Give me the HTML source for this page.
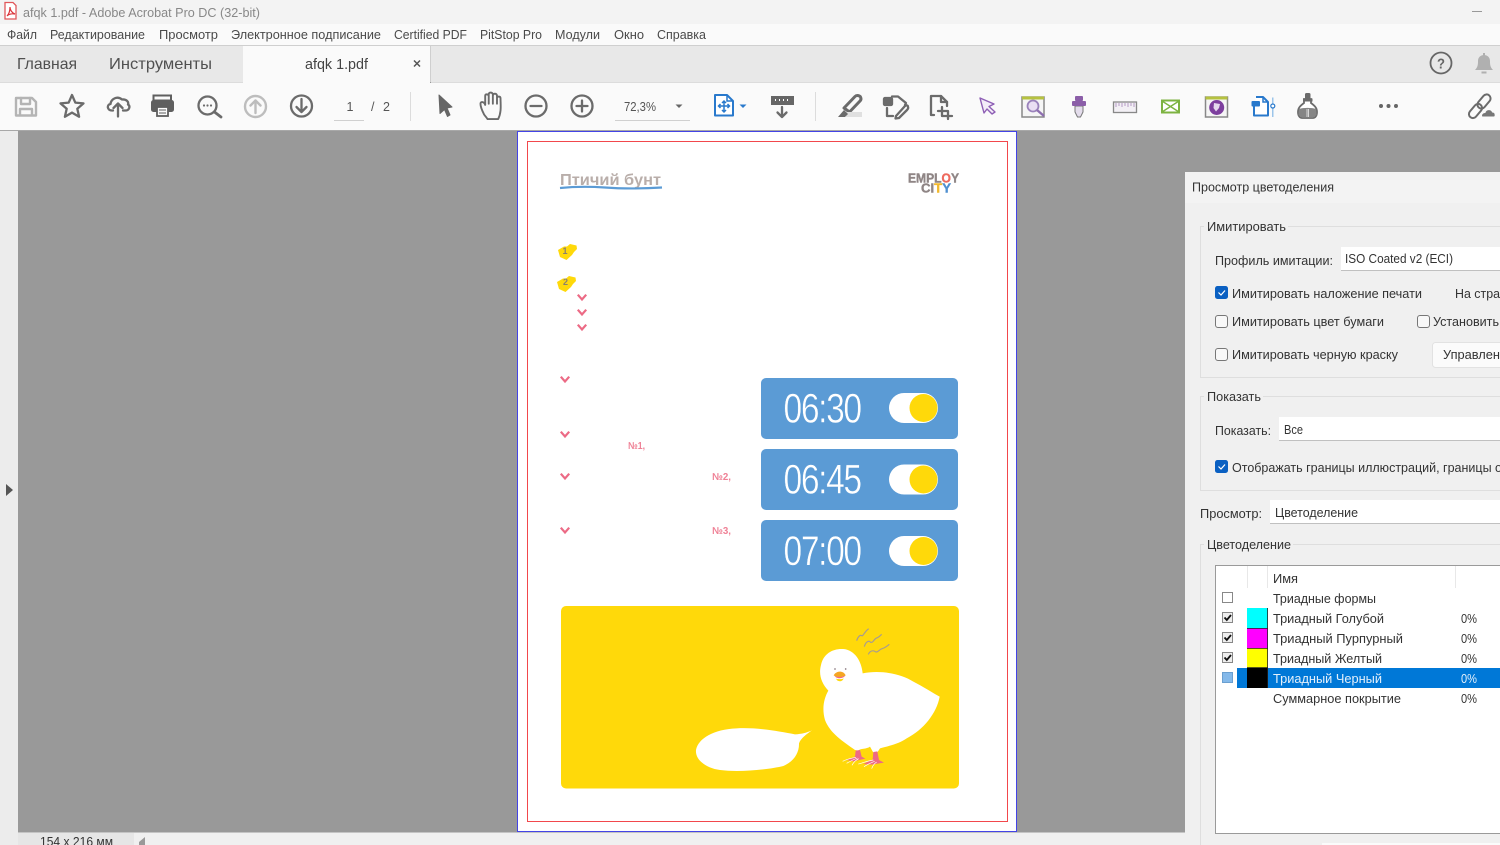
<!DOCTYPE html>
<html lang="ru"><head><meta charset="utf-8"><title>afqk 1.pdf - Adobe Acrobat Pro DC</title>
<style>
html,body{margin:0;padding:0;width:1500px;height:845px;overflow:hidden;background:#999}
svg{display:block}
text{font-family:"Liberation Sans","DejaVu Sans",sans-serif;font-size:13px;fill:#3c3c3c}
.m{fill:#4a4a4a;font-size:12.5px}
.d{fill:#333}
.i{fill:none;stroke:#6b6b6b;stroke-width:2.3;stroke-linecap:round;stroke-linejoin:round}
.l{fill:none;stroke:#b4b4b4;stroke-width:2.4;stroke-linecap:round;stroke-linejoin:round}
.g{fill:none;stroke:#dedede;stroke-width:1}
.v{fill:none;stroke:#ec6a85;stroke-width:2.2;stroke-linecap:butt;stroke-linejoin:miter}
.t{font-size:42px;fill:#fff;stroke:#5b9bd5;stroke-width:.5;letter-spacing:-1.7px}
</style></head><body>
<svg xmlns="http://www.w3.org/2000/svg" width="1500" height="845" viewBox="0 0 1500 845">
<defs>
<path id="chev" class="v" d="M-4.2 -3.300 L0 1.500 L4.200 -3.300"/>
</defs>

<!-- chrome backgrounds -->
<rect width="1500" height="24" fill="#f3f3f3"/>
<rect y="24" width="1500" height="21" fill="#fafafa"/>
<rect y="45" width="1500" height="1" fill="#cfcfcf"/>
<rect y="46" width="1500" height="36" fill="#e8e8e8"/>
<rect x="243" y="46" width="187" height="37" fill="#fafafa"/>
<rect x="430" y="46" width="1" height="36" fill="#cfcfcf"/>
<rect y="82" width="243" height="1" fill="#dcdcdc"/><rect x="431" y="82" width="1069" height="1" fill="#dcdcdc"/>
<rect y="83" width="1500" height="47" fill="#fafafa"/>
<rect y="130" width="1500" height="1" fill="#a8a8a8"/>
<rect y="131" width="18" height="714" fill="#ececec"/>
<rect x="18" y="131" width="1482" height="701" fill="#999"/>
<rect x="18" y="832" width="1482" height="13" fill="#f0f0f0"/>
<rect x="18" y="832" width="116" height="13" fill="#e6e6e6"/>
<rect x="18" y="832" width="1167" height="1" fill="#c4c4c4"/>
<path d="M6 484 L13 490 L6 496Z" fill="#555"/>
<path d="M145 837 L145 845 L139 845 L139 842Z" fill="#999"/>
<text x="40" y="846" textLength="73" lengthAdjust="spacingAndGlyphs" class="d" style="font-size:12.5px">154 x 216 мм</text>

<!-- title bar -->
<path d="M5 2.500 H13 L16 5.500 V19 H5Z" fill="#fff" stroke="#e0575a" stroke-width="1.300"/>
<path d="M7 16 C9 14 10 10 10 7 C10 10 12 13 15 14 C12 13.500 9 14 7 16Z" fill="none" stroke="#d9343a" stroke-width="1.200"/>
<text x="23" y="17" textLength="237" lengthAdjust="spacingAndGlyphs" style="fill:#888;font-size:13px">afqk 1.pdf - Adobe Acrobat Pro DC (32-bit)</text>
<rect x="1472" y="11" width="10" height="1" fill="#999"/>

<!-- menu -->
<text class="m" x="7" y="39" textLength="30" lengthAdjust="spacingAndGlyphs">Файл</text>
<text class="m" x="50" y="39" textLength="95" lengthAdjust="spacingAndGlyphs">Редактирование</text>
<text class="m" x="159" y="39" textLength="59" lengthAdjust="spacingAndGlyphs">Просмотр</text>
<text class="m" x="231" y="39" textLength="150" lengthAdjust="spacingAndGlyphs">Электронное подписание</text>
<text class="m" x="394" y="39" textLength="73" lengthAdjust="spacingAndGlyphs">Certified PDF</text>
<text class="m" x="480" y="39" textLength="62" lengthAdjust="spacingAndGlyphs">PitStop Pro</text>
<text class="m" x="555" y="39" textLength="45" lengthAdjust="spacingAndGlyphs">Модули</text>
<text class="m" x="614" y="39" textLength="30" lengthAdjust="spacingAndGlyphs">Окно</text>
<text class="m" x="657" y="39" textLength="49" lengthAdjust="spacingAndGlyphs">Справка</text>

<!-- tabs -->
<text x="17" y="69" textLength="60" lengthAdjust="spacingAndGlyphs" style="font-size:16px;fill:#505050">Главная</text>
<text x="109" y="69" textLength="103" lengthAdjust="spacingAndGlyphs" style="font-size:16px;fill:#505050">Инструменты</text>
<text x="305" y="69" textLength="63" lengthAdjust="spacingAndGlyphs" style="font-size:15px;fill:#444">afqk 1.pdf</text>
<path d="M414 60.500 L420 66.500 M420 60.500 L414 66.500" stroke="#555" stroke-width="1.500"/>
<circle cx="1441" cy="63" r="10.500" fill="none" stroke="#666" stroke-width="1.800"/>
<text x="1437" y="68.500" textLength="8" lengthAdjust="spacingAndGlyphs" style="font-size:15px;font-weight:bold;fill:#666">?</text>
<path d="M1475 70 C1478 67 1478 64 1478 61 C1478 57 1481 55 1484 55 C1487 55 1490 57 1490 61 C1490 64 1490 67 1493 70Z" fill="#b0b0b0"/><rect x="1483" y="53" width="2" height="3" fill="#b0b0b0"/><rect x="1481.500" y="71.500" width="5" height="2" fill="#b0b0b0"/>

<!-- toolbar icons left -->
<g class="l"><path d="M16 98 H32 L36 102 V115.500 H16Z"/><path d="M21 98 V104 H30 V98"/><path d="M20 115 V109 H32 V115"/></g>
<path class="i" d="M72 95 L75.300 102.600 L83.500 103.400 L77.300 108.800 L79.100 116.800 L72 112.600 L64.900 116.800 L66.700 108.800 L60.500 103.400 L68.700 102.600Z"/>
<path class="i" d="M113 110.500 H112 C107 110.500 106.500 104.500 110.500 104 C111 99 117 95.500 122 99.500 C126.500 99 129 102 128 104.500 C130.500 106 129.500 110.500 125.500 110.500 H123 M118 116.500 V104 M113.500 108 L118 103.500 L122.500 108"/>
<g><path d="M153.500 95.500 H171 V100.500 H153.500Z" fill="none" stroke="#5f5f5f" stroke-width="2"/><rect x="151" y="100" width="23" height="12" rx="2.500" fill="#5f5f5f"/><rect x="157" y="107" width="11" height="9" fill="#fafafa" stroke="#5f5f5f" stroke-width="1.800"/><path d="M159 110 H166 M159 113 H166" stroke="#5f5f5f"/></g>
<g class="i"><circle cx="207.500" cy="105.500" r="9"/><path d="M214.500 112 L221 117" stroke-width="2.800"/></g>
<circle cx="204" cy="105.500" r="1.100" fill="#6b6b6b"/><circle cx="207.500" cy="105.500" r="1.100" fill="#6b6b6b"/><circle cx="211" cy="105.500" r="1.100" fill="#6b6b6b"/>
<g class="l" style="stroke:#bdbdbd"><circle cx="255.500" cy="106.500" r="10.500"/><path d="M255.500 113 V100.500 M250.500 105.500 L255.500 100.500 L260.500 105.500"/></g>
<g class="i"><circle cx="301.500" cy="106" r="10.500"/><path d="M301.500 99 V112 M296.500 107 L301.500 112 L306.500 107"/></g>
<text x="346.500" y="111" style="font-size:12.500px;fill:#555">1</text>
<text x="371" y="111" textLength="19" lengthAdjust="spacing" style="font-size:12.500px;fill:#555">/ 2</text>
<rect x="334" y="120" width="30" height="1" fill="#d0d0d0"/>
<rect x="410" y="92" width="1" height="29" fill="#dcdcdc"/>
<path d="M439 95 L452 107 L447 108 L450 115 L447.500 116.500 L444.500 109.500 L440 113.500Z" fill="#666" stroke="#666" stroke-linejoin="round"/>
<g transform="translate(490.500 105.500) scale(1.180) translate(-488.500 -105.500)"><path class="i" style="stroke-width:1.600" d="M483 113 C481 109 480 106 480 104 C480 102 483 102 484 105 V97.500 C484 95.500 486.500 95.500 487 97.500 V96 C487 94 490 94 490.500 96 V97 C491 95 493.500 95 494 97 V99 C494.500 97.500 497 97.500 497 99.500 C497 105 498 111 495 117 H486 C485 115.500 484 114.500 483 113Z M487 97.500 V104 M490.500 97 V104 M494 99 V104"/></g>
<g class="i"><circle cx="536" cy="106" r="10.500"/><path d="M530.500 106 H541.500"/></g>
<g class="i"><circle cx="582" cy="106" r="10.500"/><path d="M576.500 106 H587.500 M582 100.500 V111.500"/></g>
<text x="624" y="111" textLength="32" lengthAdjust="spacingAndGlyphs" style="font-size:12.500px;fill:#555">72,3%</text>
<path d="M675.500 104.500 H682.500 L679 108Z" fill="#666"/>
<rect x="615" y="120" width="75" height="1" fill="#d0d0d0"/>
<path d="M715 95 H727 L733 101 V115.500 H715Z" fill="#fff" stroke="#2979cc" stroke-width="2" stroke-linejoin="round"/><path d="M727 95 V101 H733" fill="none" stroke="#2979cc" stroke-width="1.500"/>
<path d="M724 101 V112 M718.500 106 H729.500 M722 103 L724 101 L726 103 M722 110 L724 112 L726 110 M720.500 104 L718.500 106 L720.500 108 M727.500 104 L729.500 106 L727.500 108" fill="none" stroke="#2979cc" stroke-width="1.500"/>
<path d="M739.500 104.500 H746.500 L743 108Z" fill="#2979cc"/>
<rect x="771" y="96" width="23" height="9" fill="#666"/><path d="M775 100 H776 M779 100 H780 M783 100 H784 M787 100 H788" stroke="#fff" stroke-width="2"/>
<path class="i" d="M782 107 V116 M777.500 112.500 L782 117 L786.500 112.500"/>
<rect x="815" y="92" width="1" height="29" fill="#dcdcdc"/>
<path d="M844 108 L855 96.500 C857 94.500 860 96 860.500 97 C861.500 99 861 100 860 101 L849.500 112 Z" fill="#fafafa" stroke="#6b6b6b" stroke-width="3" stroke-linejoin="round"/><rect x="846" y="112" width="16" height="5" fill="#e0e0e0"/><path d="M838 117 L844 110 L848 114 L845 117Z" fill="#6b6b6b"/>
<g class="i"><path d="M892 96.500 H898 L906 103 L905 105"/><path d="M887 108 V116 H893"/><rect x="884" y="98" width="8" height="7" rx="1" fill="#6b6b6b"/><path d="M896 116 L905 106 C906 105 908 105 908 107 C908.500 108 908 109 907 110 L899 118 L895.500 118.500Z"/></g>
<g class="i"><path d="M934 115 H931 V96 H941 L947 102 V106"/><path d="M941 96 V102 H947"/><path d="M942 107 V116 H952 M938 111 H948 V119"/></g>
<path d="M980 98 L994 104 L989 106.500 L995 112 L992 114 L987 109 L984 113Z" fill="#f3ecf8" stroke="#8e5fb5" stroke-width="1.400" stroke-linejoin="round"/>

<!-- toolbar icons right -->
<rect x="1022" y="97" width="22" height="20" fill="#f5f5f5" stroke="#888" stroke-width="1.500"/><rect x="1022" y="96.500" width="22" height="3" fill="#b6c23f"/>
<circle cx="1033" cy="106" r="5.500" fill="#eadff3" stroke="#9a82bb" stroke-width="1.800"/><path d="M1037 110 L1044 116" stroke="#8e6fb0" stroke-width="2.400"/>
<path d="M1075 106 H1083 V112 L1080.500 117 H1077.500 L1075 112Z" fill="#e4ddec" stroke="#777"/><rect x="1072" y="101" width="14" height="5" rx="1" fill="#8b5ea8"/><rect x="1075" y="96" width="8" height="5" rx="1" fill="#8b5ea8"/>
<rect x="1113.500" y="102" width="23" height="10.500" fill="#f3f0f5" stroke="#888" stroke-width="1.300"/><path d="M1116 103 V107 M1119 103 V106 M1122 103 V107 M1125 103 V106 M1128 103 V107 M1131 103 V106 M1134 103 V107" stroke="#b49ac5"/>
<rect x="1162" y="100.500" width="17" height="12" fill="#fff" stroke="#7db341" stroke-width="2"/><path d="M1162 101 L1179 112 M1179 101 L1162 112" stroke="#7db341" stroke-width="1.400"/>
<rect x="1205.500" y="97" width="22" height="20" fill="#f5f5f5" stroke="#888" stroke-width="1.500"/><rect x="1205.500" y="96.500" width="22" height="3" fill="#b6c23f"/>
<circle cx="1216.700" cy="107.500" r="7.500" fill="#7d3f9e"/><path d="M1214 103 L1220 104 L1219 108 L1216 111.500 L1213.500 108Z" fill="#e6d9ee"/>
<path d="M1254 106 V115.500 H1268 V102 L1263 97 H1256" fill="#fff" stroke="#2979cc" stroke-width="2" stroke-linejoin="round"/><path d="M1263 97 V102 H1268" fill="none" stroke="#2979cc" stroke-width="1.500"/><rect x="1251.500" y="101" width="8.500" height="5.500" rx="1" fill="#2979cc"/><rect x="1272" y="97.500" width="1.500" height="19.500" fill="#9cc5ea"/><circle cx="1272.800" cy="106" r="2" fill="#fff" stroke="#2979cc" stroke-width="1.200"/>
<path d="M1304 99 H1311 V103 C1315 106 1317 108 1317 112 C1317 116 1315 118 1313 118 H1302 C1300 118 1298 116 1298 112 C1298 108 1300 106 1304 103Z" fill="#fff" stroke="#6b6b6b" stroke-width="1.800"/><path d="M1299 109 C1303 107.500 1312 107.500 1316 109 L1316.500 115 L1313 117.800 H1302 L1298.500 115Z" fill="#858585"/><path d="M1307 109 V117 M1308.500 109 V117" stroke="#d8d8d8"/><rect x="1305" y="93" width="5.500" height="7" rx="1.500" fill="#6b6b6b"/><rect x="1303" y="98.500" width="9.500" height="3" fill="#6b6b6b"/>
<circle cx="1381" cy="106" r="2" fill="#666"/><circle cx="1388.500" cy="106" r="2" fill="#666"/><circle cx="1396" cy="106" r="2" fill="#666"/>
<rect x="-8" y="-4" width="16" height="8" rx="4" transform="translate(1484 101.500) rotate(-50)" fill="none" stroke="#6b6b6b" stroke-width="2"/>
<rect x="-8" y="-4" width="16" height="8" rx="4" transform="translate(1475.500 111) rotate(-50)" fill="none" stroke="#6b6b6b" stroke-width="2"/>
<path d="M1482 117 C1480.500 114.500 1483 112.500 1485 112.500 C1486 109 1491 108.500 1492.500 112 C1495 112 1496 115 1494.500 117Z" fill="#777" stroke="#fafafa"/>

<!-- PDF page -->
<rect x="517.500" y="131.500" width="499" height="700" fill="#fff" stroke="#4444e6" stroke-width="1"/>
<rect x="527.500" y="141.500" width="480" height="680" fill="#fff" stroke="#f2484c" stroke-width="1"/>
<text x="560" y="185" textLength="101" lengthAdjust="spacingAndGlyphs" style="font-size:15.500px;font-weight:bold;fill:#b9aeaa">Птичий бунт</text>
<path d="M560 188 C575 186.500 590 186.500 605 187.500 C625 189 645 188.500 662 187.500" fill="none" stroke="#5b9bd5" stroke-width="2.200"/>
<text x="908" y="182.500" textLength="51" lengthAdjust="spacingAndGlyphs" style="font-size:12.500px;font-weight:bold;fill:#8f8585;stroke:#8f8585;stroke-width:.4">EMPL<tspan style="fill:#ee6a5e;stroke:#ee6a5e">O</tspan>Y</text>
<text x="921" y="192.500" textLength="30" lengthAdjust="spacingAndGlyphs" style="font-size:12.500px;font-weight:bold;fill:#8f8585;stroke:#8f8585;stroke-width:.4">CI<tspan style="fill:#f2b92f;stroke:#f2b92f">T</tspan><tspan style="fill:#4f8fd0;stroke:#4f8fd0">Y</tspan></text>

<!-- numbered badges -->
<path d="M558 250 L564 246.500 L567 246.500 L570 244 L576.500 245.500 L577 249 L574 252 L572 255 L566.500 260 L560 257Z" fill="#ffd90a"/>
<text x="562.500" y="254" style="font-size:9px;font-weight:bold;fill:#8a8070">1</text>
<path d="M557 282 L563 278.500 L566 278.500 L569 276 L575.500 277.500 L576 281 L573 284 L571 287 L565.500 292 L559 289Z" fill="#ffd90a"/>
<text x="563" y="285" style="font-size:9px;font-weight:bold;fill:#8a8070">2</text>

<!-- chevrons -->
<use href="#chev" x="582" y="298"/><use href="#chev" x="582" y="313"/><use href="#chev" x="582" y="328"/>
<use href="#chev" x="565" y="380"/><use href="#chev" x="565" y="435"/><use href="#chev" x="565" y="477"/><use href="#chev" x="565" y="531"/>
<use href="#chev" x="580" y="645.500"/><use href="#chev" x="580" y="676"/>
<text x="628" y="449" textLength="17" lengthAdjust="spacingAndGlyphs" style="font-size:10px;font-weight:bold;fill:#ef8095">№1,</text>
<text x="712" y="480" textLength="19" lengthAdjust="spacingAndGlyphs" style="font-size:10px;font-weight:bold;fill:#ef8095">№2,</text>
<text x="712" y="534" textLength="19" lengthAdjust="spacingAndGlyphs" style="font-size:10px;font-weight:bold;fill:#ef8095">№3,</text>

<!-- alarm cards -->
<rect x="761" y="378" width="197" height="61" rx="5" fill="#5b9bd5"/>
<rect x="761" y="449" width="197" height="61" rx="5" fill="#5b9bd5"/>
<rect x="761" y="520" width="197" height="61" rx="5" fill="#5b9bd5"/>
<text class="t" transform="translate(783.500 422.500) scale(.8 1)">06:30</text>
<text class="t" transform="translate(783.500 493.500) scale(.8 1)">06:45</text>
<text class="t" transform="translate(783.500 565) scale(.8 1)">07:00</text>
<rect x="889" y="393" width="49" height="30" rx="15" fill="#fff"/><circle cx="923.500" cy="408" r="14" fill="#ffd90a"/>
<rect x="889" y="464.500" width="49" height="30" rx="15" fill="#fff"/><circle cx="923.500" cy="479.500" r="14" fill="#ffd90a"/>
<rect x="889" y="536" width="49" height="30" rx="15" fill="#fff"/><circle cx="923.500" cy="551" r="14" fill="#ffd90a"/>

<!-- yellow panel with duck -->
<rect x="561" y="606" width="398" height="182.500" rx="5" fill="#ffd90a"/>
<g transform="translate(680 620) scale(.33333)">
<path fill="#fff" d="M48 390 C55 355 100 328 170 325 C240 322 300 335 345 343 C365 342 380 338 396 331 C380 342 362 355 357 370 C358 400 340 425 310 438 C270 448 180 458 120 450 C80 445 45 420 48 390Z"/>
<path fill="#fff" d="M445 212 C425 190 415 165 423 135 C430 100 460 85 490 87 C525 90 545 125 548 160 C600 150 660 160 700 185 C730 200 760 220 779 230 C770 280 730 330 680 355 C660 370 620 380 600 385 L590 400 L580 398 L570 380 C560 388 540 385 535 392 L525 390 C490 365 450 340 435 300 C425 265 432 235 445 212Z"/>
<path fill="#f5a623" d="M461 166 C468 152 490 150 497 166 C490 172 470 174 461 166Z"/>
<path fill="#ee6a85" d="M464 168 C472 172 488 172 495 167 C492 176 470 178 464 168Z"/>
<path fill="#ffd90a" d="M468 176 C474 178 486 178 491 175 C488 186 472 187 468 176Z"/>
<circle cx="465" cy="147" r="2.500" fill="#8a7a80"/><circle cx="497" cy="147" r="2.500" fill="#8a7a80"/>
<path fill="#ee6a85" d="M527 392 L540 390 L545 410 L556 416 L520 424 L500 420 L525 410Z M580 396 L592 394 L597 420 L612 428 L575 434 L550 432 L578 418Z"/>
<path d="M488 424 C500 418 515 414 528 412 M500 430 C510 424 522 418 532 414 M516 436 C520 428 528 420 536 416 M535 432 C550 428 565 422 580 420 M552 440 C562 434 572 428 584 424 M575 446 C578 438 584 430 590 426" fill="none" stroke="#fff" stroke-width="2"/>
<path d="M530 62 C534 50 540 44 545 47 C550 50 552 36 566 26 M553 80 C556 68 565 60 571 66 C578 72 582 56 590 54 C596 52 600 48 605 43 M565 103 C570 92 580 90 586 95 C592 100 598 88 606 86 C615 84 622 78 628 73" fill="none" stroke="#a79b92" stroke-width="3.500"/>
</g>

<!-- separation dialog -->
<rect x="1185" y="172" width="315" height="673" fill="#f0f0f0"/>
<rect x="1185" y="172" width="315" height="31" fill="#f3f3f3"/>
<text class="d" x="1192" y="191.500" textLength="142" lengthAdjust="spacingAndGlyphs">Просмотр цветоделения</text>

<path class="g" d="M1204 226.500 H1200.500 V377.500 H1500"/>
<path class="g" d="M1288 226.500 H1500"/>
<text class="d" x="1207" y="231" textLength="79" lengthAdjust="spacingAndGlyphs">Имитировать</text>
<text class="d" x="1215" y="265" textLength="118" lengthAdjust="spacingAndGlyphs">Профиль имитации:</text>
<rect x="1341" y="247" width="159" height="24" fill="#fff"/><rect x="1341" y="270" width="159" height="1" fill="#c0c0c0"/>
<text class="d" x="1345" y="263" textLength="108" lengthAdjust="spacingAndGlyphs">ISO Coated v2 (ECI)</text>

<rect x="1215" y="286" width="13" height="13" rx="2.500" fill="#0a60c2"/><path d="M1218.500 292.500 L1221 295 L1225 290.500" fill="none" stroke="#fff" stroke-width="1.200"/>
<text class="d" x="1232" y="298" textLength="190" lengthAdjust="spacingAndGlyphs">Имитировать наложение печати</text>
<text class="d" x="1455" y="298" textLength="45" lengthAdjust="spacingAndGlyphs">На стра</text>
<rect x="1215.500" y="315.500" width="12" height="12" rx="2.500" fill="#f8f8f8" stroke="#777"/>
<text class="d" x="1232" y="326" textLength="152" lengthAdjust="spacingAndGlyphs">Имитировать цвет бумаги</text>
<rect x="1417.500" y="315.500" width="12" height="12" rx="2.500" fill="#f8f8f8" stroke="#777"/>
<text class="d" x="1433" y="326" textLength="66" lengthAdjust="spacingAndGlyphs">Установить</text>
<rect x="1215.500" y="348.500" width="12" height="12" rx="2.500" fill="#f8f8f8" stroke="#777"/>
<text class="d" x="1232" y="359" textLength="166" lengthAdjust="spacingAndGlyphs">Имитировать черную краску</text>
<rect x="1432.500" y="342.500" width="80" height="25" rx="3" fill="#fbfbfb" stroke="#e2e2e2"/>
<text class="d" x="1443" y="359" textLength="57" lengthAdjust="spacingAndGlyphs">Управлен</text>

<path class="g" d="M1204 396.500 H1200.500 V490.500 H1500"/>
<path class="g" d="M1263 396.500 H1500"/>
<text class="d" x="1207" y="401" textLength="54" lengthAdjust="spacingAndGlyphs">Показать</text>
<text class="d" x="1215" y="435" textLength="56" lengthAdjust="spacingAndGlyphs">Показать:</text>
<rect x="1279" y="417" width="221" height="24" fill="#fff"/><rect x="1279" y="440" width="221" height="1" fill="#c0c0c0"/>
<text class="d" x="1284" y="434" textLength="19" lengthAdjust="spacingAndGlyphs">Все</text>
<rect x="1215" y="460" width="13" height="13" rx="2.500" fill="#0a60c2"/><path d="M1218.500 466.500 L1221 469 L1225 464.500" fill="none" stroke="#fff" stroke-width="1.200"/>
<text class="d" x="1232" y="472" textLength="270" lengthAdjust="spacingAndGlyphs">Отображать границы иллюстраций, границы о</text>

<text class="d" x="1200" y="518" textLength="62" lengthAdjust="spacingAndGlyphs">Просмотр:</text>
<rect x="1270" y="500" width="230" height="24" fill="#fff"/><rect x="1270" y="523" width="230" height="1" fill="#c0c0c0"/>
<text class="d" x="1275" y="517" textLength="83" lengthAdjust="spacingAndGlyphs">Цветоделение</text>

<path class="g" d="M1204 544.500 H1200.500 V845"/>
<path class="g" d="M1293 544.500 H1500"/>
<text class="d" x="1207" y="549" textLength="84" lengthAdjust="spacingAndGlyphs">Цветоделение</text>

<!-- ink list -->
<rect x="1215.500" y="565.500" width="300" height="268" fill="#fff" stroke="#9a9a9a"/>
<path d="M1247.500 566 V588 M1267.500 566 V588 M1455.500 566 V588" stroke="#e8e8e8"/>
<text class="d" x="1273" y="583" textLength="25" lengthAdjust="spacingAndGlyphs">Имя</text>
<rect x="1237" y="668" width="263" height="20" fill="#0078d7"/>
<rect x="1247" y="608" width="21" height="20" fill="#00ffff"/>
<rect x="1247" y="628" width="21" height="20" fill="#ff00ff"/>
<rect x="1247" y="648" width="21" height="20" fill="#ffff00"/>
<rect x="1247" y="668" width="21" height="20" fill="#000"/>
<path d="M1247 628.500 H1268 M1247 648.500 H1268 M1247 667.500 H1268 M1267.500 608 V688" stroke="#222" stroke-width=".8"/>
<rect x="1222.500" y="592.500" width="10" height="10" fill="#fff" stroke="#888"/>
<rect x="1222.500" y="612.500" width="10" height="10" fill="#eee" stroke="#888"/><path d="M1224.500 617.500 L1226.800 620 L1231 615" fill="none" stroke="#111" stroke-width="1.800"/>
<rect x="1222.500" y="632.500" width="10" height="10" fill="#eee" stroke="#888"/><path d="M1224.500 637.500 L1226.800 640 L1231 635" fill="none" stroke="#111" stroke-width="1.800"/>
<rect x="1222.500" y="652.500" width="10" height="10" fill="#eee" stroke="#888"/><path d="M1224.500 657.500 L1226.800 660 L1231 655" fill="none" stroke="#111" stroke-width="1.800"/>
<rect x="1222.500" y="672.500" width="10" height="10" fill="#84b9ea" stroke="#6a9fd0"/>
<text class="d" x="1273" y="603" textLength="103" lengthAdjust="spacingAndGlyphs">Триадные формы</text>
<text class="d" x="1273" y="623" textLength="111" lengthAdjust="spacingAndGlyphs">Триадный Голубой</text>
<text class="d" x="1273" y="643" textLength="130" lengthAdjust="spacingAndGlyphs">Триадный Пурпурный</text>
<text class="d" x="1273" y="663" textLength="109" lengthAdjust="spacingAndGlyphs">Триадный Желтый</text>
<text x="1273" y="683" textLength="109" lengthAdjust="spacingAndGlyphs" style="fill:#e4f0fb">Триадный Черный</text>
<text class="d" x="1273" y="703" textLength="128" lengthAdjust="spacingAndGlyphs">Суммарное покрытие</text>
<text class="d" x="1461" y="623" textLength="16" lengthAdjust="spacingAndGlyphs">0%</text>
<text class="d" x="1461" y="643" textLength="16" lengthAdjust="spacingAndGlyphs">0%</text>
<text class="d" x="1461" y="663" textLength="16" lengthAdjust="spacingAndGlyphs">0%</text>
<text x="1461" y="683" textLength="16" lengthAdjust="spacingAndGlyphs" style="fill:#e4f0fb">0%</text>
<text class="d" x="1461" y="703" textLength="16" lengthAdjust="spacingAndGlyphs">0%</text>
<rect x="1322" y="843" width="178" height="2" fill="#fbfbfb"/>
</svg>
</body></html>
